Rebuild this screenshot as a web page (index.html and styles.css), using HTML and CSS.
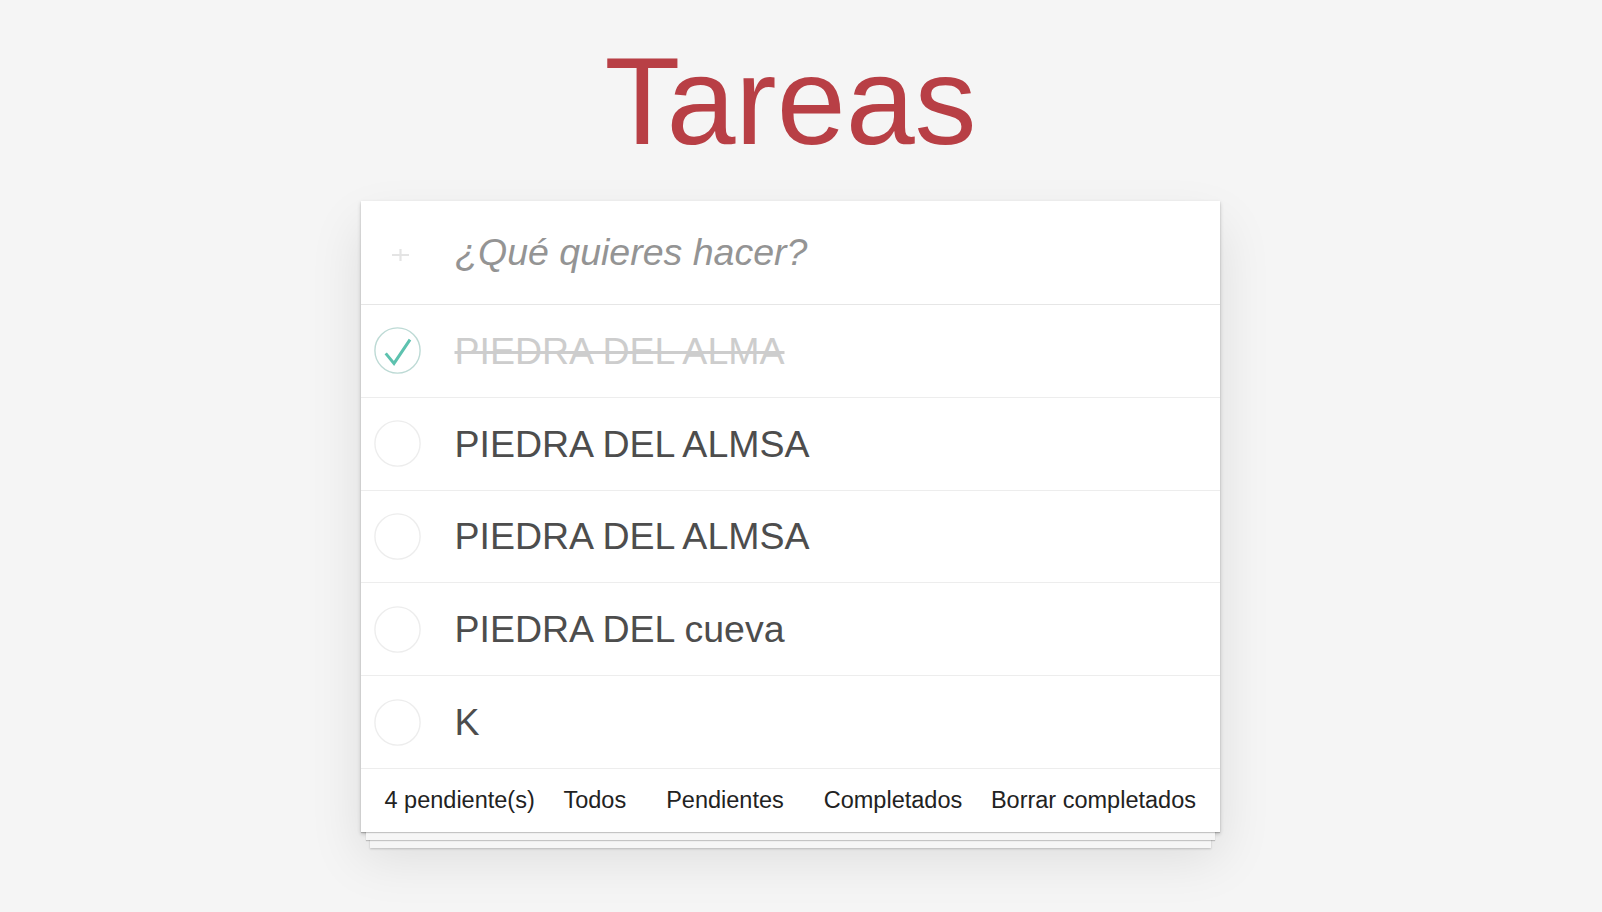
FILE: index.html
```html
<!DOCTYPE html>
<html lang="es">
<head>
<meta charset="utf-8">
<title>Tareas</title>
<link rel="stylesheet" href="styles.css">
</head>
<body>
<main class="app">
  <h1 class="title">Tareas</h1>
  <section class="card">
    <header class="new-todo">
      <span class="add-icon">
        <svg viewBox="0 0 17 12" width="17" height="12"><path d="M0 6H17M8.5 0V12" fill="none" stroke="#e4e4e4" stroke-width="2.2"/></svg>
      </span>
      <input class="new-input" type="text" placeholder="¿Qué quieres hacer?">
    </header>
    <ul class="todo-list">
      <li class="todo done">
        <span class="toggle"><svg viewBox="0 0 47 47" width="47" height="47"><circle cx="23.5" cy="23.5" r="22.6" fill="none" stroke="#bddad5" stroke-width="1.4"/><path d="M11.7 26.4L20 36.4L36 12.6" fill="none" stroke="#5dc2af" stroke-width="3"/></svg></span>
        <span class="label">PIEDRA DEL ALMA</span>
      </li>
      <li class="todo">
        <span class="toggle"><svg viewBox="0 0 47 47" width="47" height="47"><circle cx="23.5" cy="23.5" r="22.6" fill="none" stroke="#ededed" stroke-width="1.4"/></svg></span>
        <span class="label">PIEDRA DEL ALMSA</span>
      </li>
      <li class="todo">
        <span class="toggle"><svg viewBox="0 0 47 47" width="47" height="47"><circle cx="23.5" cy="23.5" r="22.6" fill="none" stroke="#ededed" stroke-width="1.4"/></svg></span>
        <span class="label">PIEDRA DEL ALMSA</span>
      </li>
      <li class="todo">
        <span class="toggle"><svg viewBox="0 0 47 47" width="47" height="47"><circle cx="23.5" cy="23.5" r="22.6" fill="none" stroke="#ededed" stroke-width="1.4"/></svg></span>
        <span class="label">PIEDRA DEL cueva</span>
      </li>
      <li class="todo">
        <span class="toggle"><svg viewBox="0 0 47 47" width="47" height="47"><circle cx="23.5" cy="23.5" r="22.6" fill="none" stroke="#ededed" stroke-width="1.4"/></svg></span>
        <span class="label">K</span>
      </li>
    </ul>
    <footer class="footer">
      <span class="count">4 pendiente(s)</span>
      <span class="filters">
        <span class="filter">Todos</span>
        <span class="filter">Pendientes</span>
        <span class="filter">Completados</span>
      </span>
      <span class="clear">Borrar completados</span>
    </footer>
  </section>
</main>
</body>
</html>
```

FILE: styles.css
```css
* {
  box-sizing: border-box;
}

html,
body {
  margin: 0;
  padding: 0;
}

html {
  min-height: 100%;
  background: #f5f5f5;
}

body {
  min-height: 912px;
  background: #f5f5f5;
  font-family: "Liberation Sans", Arial, sans-serif;
  padding: 39px 21px 80px 0;
}

.app {
  width: 859px;
  margin: 0 auto;
}

.title {
  margin: 0 0 38px;
  font-size: 124px;
  line-height: 124px;
  font-weight: 400;
  color: #b83f45;
  text-align: center;
}

.card {
  background: #fff;
  box-shadow:
    0 1px 1px rgba(0, 0, 0, 0.2),
    0 13px 0 -5px #f6f6f6,
    0 14px 1px -5px rgba(0, 0, 0, 0.2),
    0 25px 0 -9px #f6f6f6,
    0 26px 2px -9px rgba(0, 0, 0, 0.2),
    0 2px 4px 0 rgba(0, 0, 0, 0.2),
    0 25px 50px 0 rgba(0, 0, 0, 0.1);
}

.new-todo {
  display: flex;
  align-items: center;
  height: 104px;
  border-bottom: 1px solid #e6e6e6;
  padding-left: 30.7px;
}

.add-icon {
  display: flex;
  margin-top: 4px;
}

.add-icon svg {
  display: block;
}

.new-input {
  flex: 1;
  margin: 0 0 1px 46.4px;
  padding: 0;
  border: none;
  outline: none;
  background: transparent;
  font-family: "Liberation Sans", Arial, sans-serif;
  font-style: italic;
  font-size: 37.5px;
  line-height: 44px;
  height: 44px;
  color: #4d4d4d;
}

.new-input::placeholder {
  color: #949494;
  font-style: italic;
}

.todo-list {
  list-style: none;
  margin: 0;
  padding: 0;
}

.todo {
  display: flex;
  align-items: center;
  height: 92.8px;
  border-bottom: 1px solid #ededed;
  padding-left: 12.5px;
}

.toggle {
  flex: none;
  width: 47px;
  height: 47px;
  margin-right: 34px;
}

.toggle svg {
  display: block;
}

.label {
  font-size: 37.5px;
  line-height: 46px;
  color: #4d4d4d;
  white-space: nowrap;
}

.done .label {
  color: #cdcdcd;
  text-decoration: line-through;
}

.footer {
  display: flex;
  align-items: center;
  justify-content: space-between;
  height: 63px;
  padding: 0 24px 0 23.5px;
  font-size: 23.5px;
  color: #222;
}

.filters {
  display: flex;
  gap: 40px;
}
```
